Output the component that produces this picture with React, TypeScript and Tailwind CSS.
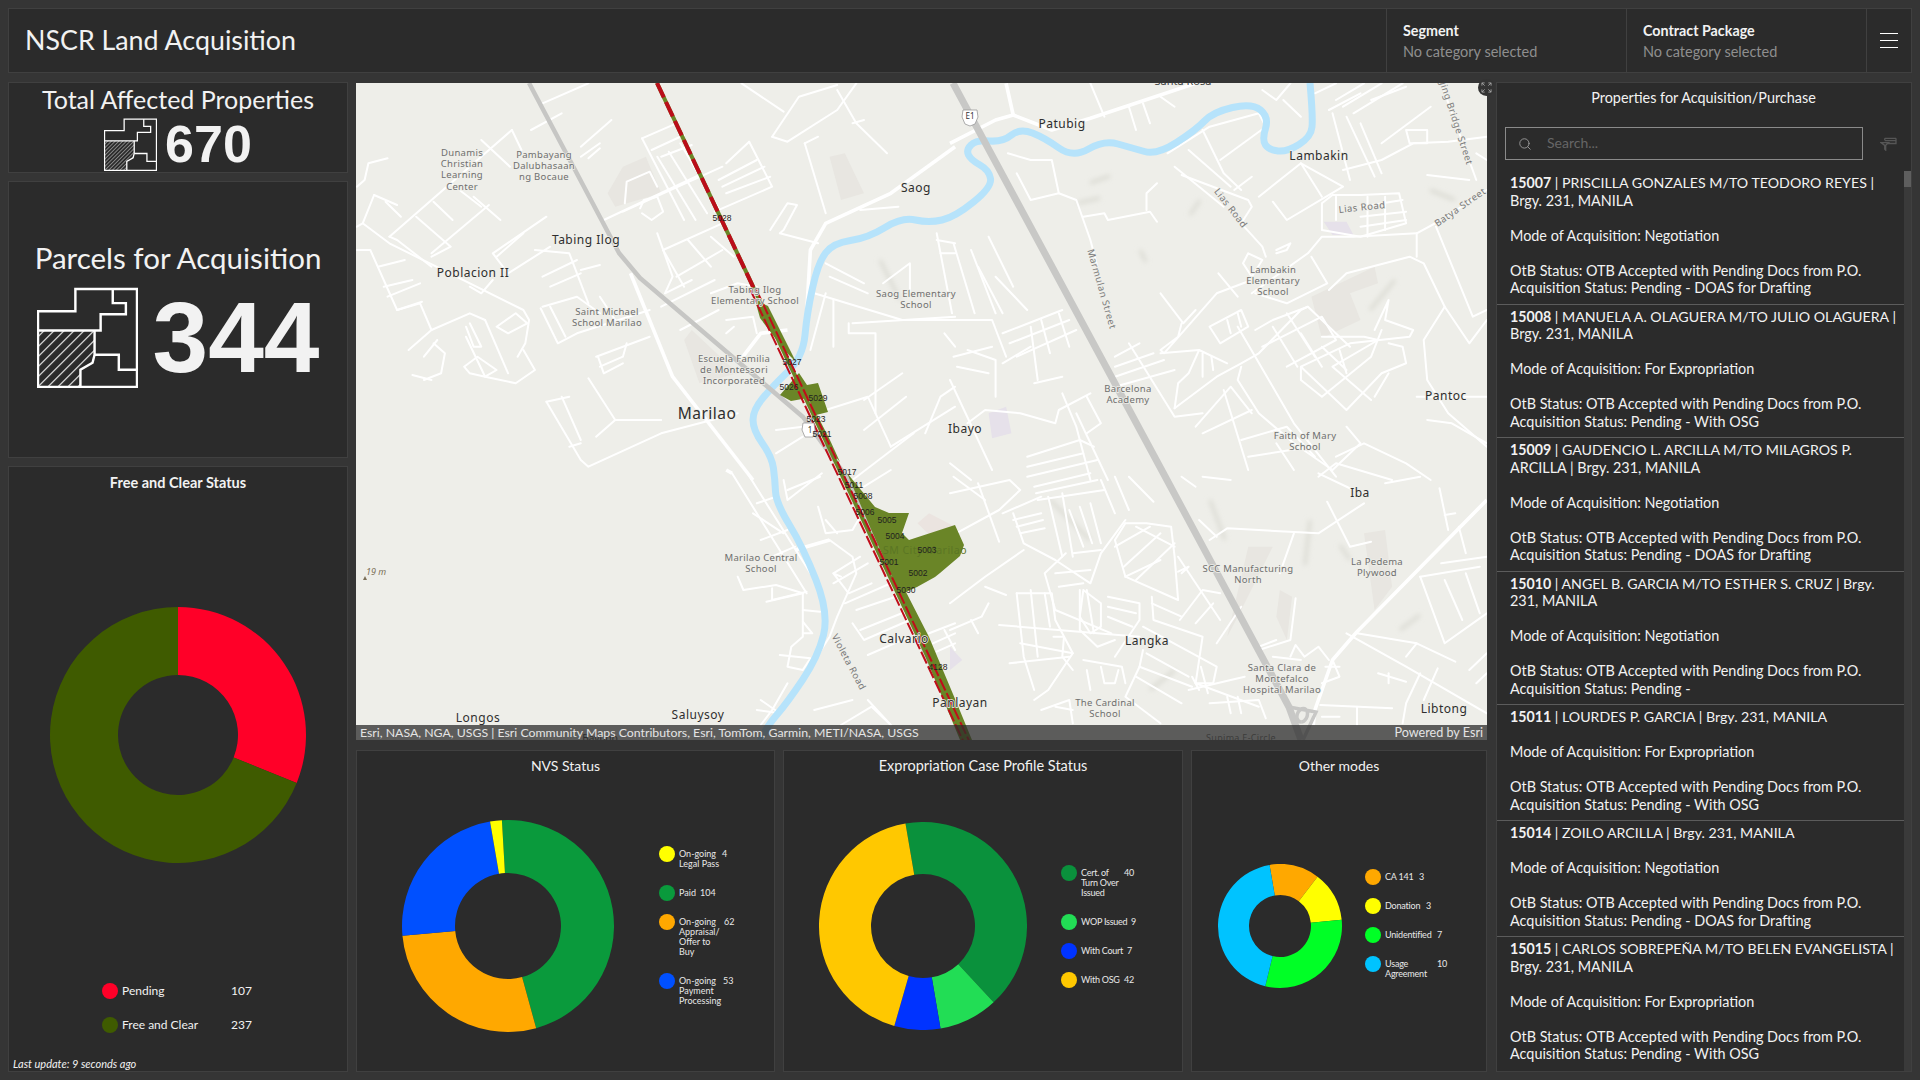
import React from "react";
import { Search } from "lucide-react";

type Region = { ox: number; oy: number; sx: number; sy: number; lines: number[][] };

const toPath = (r: Region, l: number[]) => {
  let d = "";
  for (let i = 0; i < l.length; i += 2) {
    d += `${i === 0 ? "M" : "L"}${(r.ox + l[i] / r.sx).toFixed(1)} ${(r.oy + l[i + 1] / r.sy).toFixed(1)}`;
  }
  return d;
};

const R3 = { ox: 355, oy: 80, sx: 2.613, sy: 3 };
const R4 = { ox: 950, oy: 80, sx: 2.85, sy: 3 };
const R5 = { ox: 355, oy: 470, sx: 2.613, sy: 3 };
const R6 = { ox: 950, oy: 470, sx: 2.85, sy: 3 };

const roads: Region[] = [
  { ...R3, lines: [
    [490,70,610,10],[1010,10,1120,95],[1090,170,1160,50,1260,15],[1090,170,1130,185,1260,90,1310,10],[1260,30,1310,130,1390,220],[1300,130,1330,120],
    [750,175,860,420],[790,230,890,420],[820,215,920,400],[850,190,950,385],[750,175,840,130],[775,210,860,165],[800,230,880,195],
    [650,420,900,285],[700,395,960,260],[705,370,710,305,770,275,790,320],[750,400,775,420,805,395,790,350,755,360,745,385],
    [950,300,1050,240],[960,320,1070,260],[970,340,1085,290],[1030,185,1090,320,940,395],[1030,185,970,250],
    [1175,190,1210,170],[1175,190,1230,400],[1085,450,1130,370,1155,375,1120,450,1110,460,1210,490],
    [590,200,670,120],[590,230,640,190],[610,235,640,205],[460,150,540,100],
    [410,150,90,470],[350,375,200,520],[410,150,435,210],[330,180,405,260],
    [85,235,35,250,25,300,5,320],[50,345,20,430,5,440],[50,345,110,375],[80,365,120,410],
    [5,510,40,510,110,690,175,665],[20,430,90,490,440,690,455,720,445,790,425,830],[90,470,110,480,200,560],
    [60,560,130,540],[75,620,150,600],[85,650,170,610],[160,410,250,500,200,530],[205,365,255,420],[250,310,330,380],[310,350,380,420],
    [110,690,170,670,200,750,140,810],[200,750,300,700,340,720],[300,620,330,640,360,600],[290,770,340,890,420,910,470,870,440,810],
    [340,720,400,880],[370,740,420,700,450,730,400,760,370,740],[285,860,320,830,370,870,340,890,300,880,285,860],
    [205,790,235,820,225,880,180,900],[180,830,215,780],[150,885,200,900],[300,730,330,800,310,800,290,740],
    [500,410,360,520,400,580,510,500],[440,460,370,530],[470,510,560,520,610,670],[490,590,580,540],[590,570,640,555],[510,620,590,580],
    [490,680,580,650,640,700],[485,685,530,790,580,760,770,690],[510,680,550,770],[640,650,680,720],
    [805,510,860,620],[805,510,960,430],[840,590,960,510],[870,480,930,560],[930,470,990,530],[790,460,830,590,810,640,880,600],
    [930,640,1000,610,1050,620],[800,680,940,600],[850,750,950,690],[970,720,1040,710,1050,760],[970,760,990,740],
    [630,830,770,770],[640,860,700,830,710,790],[635,830,650,880,700,850],[610,895,680,1020,800,1020],
    [500,965,590,1140,610,1160,800,1060,1000,1000],[540,950,590,1080],[560,1100,590,1090],[630,1070,680,1020],[500,965,560,950],
    [1190,810,1230,640],[1200,640,1430,720,1568,720],[1240,590,1340,640],[1230,550,1330,610],[1250,660,1250,800],[1290,730,1290,760,1360,760,1360,1000],
    [1380,610,1450,550,1450,640],[1300,730,1568,710],[1330,960,1430,880],[1330,1050,1440,950],[1400,1100,1568,980],[1300,1200,1460,1060],
    [1100,1050,1170,1040],[1100,1120,1170,1070],[1230,990,1340,950,1400,1100],[1490,1060,1530,950,1568,920],
    [1520,480,1568,490],[1530,520,1568,520],[1520,460,1560,700],[1540,760,1568,800],[1320,390,1420,380],
  ]},
  { ...R4, lines: [
    [510,80,530,150],[550,70,570,130],[600,50,640,80],[400,10,440,110],[165,220,230,240,290,240,310,340,230,360,190,280],[310,340,360,360,400,480,420,560],[380,410,440,400,450,420,570,395,590,425],[560,390,560,340,590,310],
    [620,220,740,140,880,100,900,140,770,240],[640,260,780,380],[660,285,850,360,860,380,830,430,890,500,900,530],[680,210,800,320],[720,150,780,280,830,330],[810,330,860,290],
    [880,350,1000,250,1120,320,960,420,920,365],[1000,250,1060,350],[860,640,1020,520,1060,470,1150,470,1330,460,1400,420,1530,330],
    [660,730,650,770,600,810,610,820,760,640,860,600],[600,640,665,730,700,690],[765,580,820,650],[1030,530,1075,610,960,670,870,640],
    [1080,630,1130,580,1310,530,1350,550,1410,680,1480,790,1530,720],[1330,460,1330,530],[1385,440,1490,710,1530,690],[1410,680,1350,780,1360,900,1420,1000,1530,1100],
    [1060,370,1060,450,1170,470,1300,430,1280,340,1170,345,1090,345,1060,370],[1170,380,1290,360],[1170,410,1300,395],[1170,440,1300,420],[1240,350,1240,450],[1190,350,1190,470],[1100,350,1100,420],
    [1040,40,1100,10],[1100,60,1180,10],[1120,80,1230,10],[1150,100,1290,10],[1200,60,1300,20],[1090,100,1140,300],[1130,110,1210,290],[1170,130,1230,280],[1230,190,1370,80],[1300,150,1360,150,1360,190,1310,190,1300,150],[1120,270,1230,240,1320,190,1420,185,1530,170],[1400,10,1500,300],[1360,285,1480,300],[1500,220,1530,240],[1080,90,1170,40],[890,30,930,60,970,10],[950,60,1000,110],
    [10,490,70,700],[60,510,130,700],[80,560,150,700],[110,470,180,620],[130,590,220,690],[0,720,120,720,160,830],[150,760,320,690],[170,790,340,720],[190,830,360,750],[230,740,250,900],[260,720,285,820],[310,700,340,800],
    [50,810,130,840,130,950],[220,1130,370,1080,410,1100],[220,1160,380,1120],[220,1190,420,1140],[0,900,120,1170],[0,1150,60,1200],[400,940,310,990,300,1030,200,1000,100,990,50,1030],[360,1000,450,1200],[320,940,360,1040,400,1200],[390,950,430,1030,390,1060],[10,830,120,800],[20,860,110,880],[150,850,230,800],[240,910,320,890],
    [470,830,540,790],[470,860,580,820],[470,890,610,840],[470,920,640,870],[510,790,640,1010,720,1000],[600,820,710,810,790,850],[710,810,680,880,650,910,640,985],[720,820,720,890],[745,830,750,870],[640,985,760,890,830,850,880,820,1000,690,1020,680,1140,800],
    [740,740,830,690,850,740,770,790,740,740],[790,720,800,760],[820,700,830,740],[820,740,870,830,980,1030,1100,1190],[870,750,920,720,1020,680],[890,800,1060,710,1100,780,960,860],[920,740,990,860],[960,700,1040,830],[1000,760,1060,860],
    [1060,770,1180,770,1220,780,1090,860,1200,960],[1060,800,1130,870],[1110,810,1130,880],[1210,750,1250,660,1240,720,1320,750,1310,770,1140,790,1000,860,1000,900,1060,950,1200,830,1230,750],[1000,860,1130,990,1230,880,1300,850,1290,800,1250,790],[1210,950,1250,880],
    [830,860,820,900,880,1000,980,1090,1090,1170,1170,1090,1130,1040],[700,1040,800,920,860,1000],[720,1060,860,990],[780,930,850,1170],[830,1080,960,1040,1040,1130],[850,1130,1030,1100],[1100,1130,1180,1090,1300,1150,1370,1200],[1330,950,1530,950],[1360,1020,1430,1030,1530,1090],[1050,1190,1100,1150,1260,1200],
    [930,1090,980,1170],[850,520,890,540,860,590,835,550,850,520],[930,510,970,490,960,510,930,520],
  ]},
  { ...R5, lines: [
    [985,10,1180,370],[1020,0,1190,310],[1050,100,1100,80],[1040,130,1120,190],[1060,210,1130,180],[1090,260,1150,230],
    [1000,320,1015,360,1100,345,1170,370],[1090,355,1090,390,1180,365],[1075,395,1170,370],[1170,370,1170,500,1140,530,1130,590,1170,600,1190,565,1110,555],[1170,420,1215,425],[1170,455,1195,490,1170,490],
    [1130,640,1090,720,1060,765],[1060,690,1110,730,1050,720],[1120,30,1130,90,1220,10],[1130,60,1215,20],[1210,110,1230,190,1300,180,1340,100],[1230,150,1260,190],
    [1240,210,1300,260,1310,310,1260,440,1240,500,1140,680],[1250,310,1320,260],[1250,340,1340,280],[1280,400,1420,330],[1310,420,1440,370],[1320,480,1450,420],[1270,320,1250,310,1290,370,1350,340],[1340,555,1450,500],[1300,460,1330,510,1450,450],
    [1200,720,1300,690],[1270,765,1350,710,1400,765],[1340,690,1400,765],[1500,490,1568,460],[1510,520,1568,490],[1520,545,1568,520],[1540,480,1568,540],[1330,50,1400,0],
  ]},
  { ...R6, lines: [
    [0,70,170,30,200,60,140,120,0,200],[80,40,140,215],[150,130,260,80],[180,130,210,220,300,270,400,340,430,250,500,150],
    [240,50,400,10],[245,70,420,30],[250,90,440,60],[180,150,260,130],[190,170,265,150],[200,190,270,175],
    [280,80,320,260],[320,70,350,260],[340,120,380,230],[370,110,405,220],[400,100,430,220],[430,30,470,130],[470,20,510,120],[510,20,580,95],
    [350,250,430,240],[330,250,270,310,300,420,460,490],[300,310,400,300],[310,350,380,340],[380,360,430,400,430,470,400,490,370,440,380,360],
    [500,160,470,210,500,320,650,390,640,260,630,170,560,160,500,160],[530,170,640,230],[470,230,570,170],[495,290,600,190],[530,330,640,220],[500,320,600,270],
    [650,260,770,450],[660,310,680,290,650,305],[575,380,580,450,720,500,700,640,750,640,760,590,550,470],[575,400,660,440],[655,450,720,360,770,370],[700,460,750,400],
    [450,380,540,400,540,450,470,560],[450,410,530,430],[450,440,520,470],[190,370,290,370,300,450,350,550,280,660,240,690],[190,370,210,560,240,660],[230,360,250,560],[270,370,285,470],
    [140,465,540,500],[200,520,350,550],[295,500,325,500,320,560,350,600],[170,580,340,560],[370,360,370,480,420,530,470,510],[390,360,410,490],
    [380,570,490,590,500,640],[390,600,400,660],[430,590,440,640,470,640,480,600],[530,620,660,700],[560,550,680,620],[540,590,690,650],[550,540,540,590,500,680,600,760],
    [680,660,800,630,840,620],[690,620,710,660],[715,590,735,670],[700,640,880,710],[740,700,880,690,900,745],[790,680,800,730],[820,680,830,730],
    [880,530,930,510],[920,560,1000,570],[970,560,985,525,1010,560,1050,530,1080,570],[1090,570,1110,620,1060,640],[1070,590,1110,590],
    [1130,490,1300,590,1530,730],[1160,490,1330,520,1440,575],[1330,520,1300,560],[1220,610,1300,635],[1250,610,1250,640],[1340,610,1300,700,1290,760],[1390,595,1350,690],
    [1055,705,1260,715],[1060,740,1110,740],[1160,710,1160,765],[1340,320,1410,520,1530,430],[1410,330,1460,450],[1470,310,1510,430],[1340,320,1510,290],[1400,280,1530,260],
    [710,150,760,200],[740,210,790,175,1050,190,1180,100],[1075,95,1140,230,1200,215],[980,190,940,310],[1395,55,1420,180],[1410,135,1440,130],[1450,170,1470,250],[1480,600,1530,550],[1500,640,1530,610],
    [760,520,830,410],[985,385,970,510,880,540],[0,400,100,320,210,240],[100,350,160,375],[0,480,90,440,110,400],[60,450,80,490],[10,20,100,90],[260,720,340,690,350,760],[300,710,350,720],
    [660,20,700,50],[720,20,800,30],[1050,10,1150,60],[1240,40,1340,20],
  ]},
];

const thick: Region[] = [
  { ...R3, lines: [[1180,700,1190,510,1230,430,1400,340,1568,200],[1000,850,1060,760,1130,750],[720,580,830,890,1040,1200]] },
  { ...R4, lines: [[0,190,130,120,180,105,290,150,400,115,700,10],[160,10,180,105]] },
  { ...R5, lines: [[970,0,985,10],[1150,240,1240,210]] },
  { ...R6, lines: [[1530,90,1160,485,1090,570,1040,720,1035,765]] },
];

const patches: [Region, number[], string][] = [
  [{ ...R3, lines: [] }, [700,260,760,230,800,340,680,380,660,340], "#e8e6e1"],
  [{ ...R3, lines: [] }, [1240,230,1280,220,1330,340,1270,360], "#e8e6e1"],
  [{ ...R3, lines: [] }, [860,780,880,750,1000,880,900,910], "#e8e6e1"],
  [{ ...R4, lines: [] }, [1030,650,1210,560,1220,610,1140,640,1170,720,1060,775], "#e8e6e1"],
  [{ ...R4, lines: [] }, [110,1000,160,980,175,1060,120,1075], "#e6e1ea"],
  [{ ...R4, lines: [] }, [1065,425,1130,425,1150,465,1090,465], "#e6e1ea"],
  [{ ...R6, lines: [] }, [1180,190,1240,180,1260,350,1210,420], "#e8e6e1"],
  [{ ...R6, lines: [] }, [850,230,920,230,830,420,790,500], "#e8e6e1"],
  [{ ...R6, lines: [] }, [940,360,975,380,960,510,930,440], "#e8e6e1"],
  [{ ...R6, lines: [] }, [0,530,35,570,0,600], "#e6e1ea"],
  [{ ...R5, lines: [] }, [1470,160,1500,130,1568,170,1510,205], "#ebe4e0"],
];

const smudges: number[][] = [
  [1090,183,1110,176],[1078,203,1100,198],[1140,250,1146,262],[1200,200,1190,215],[1430,190,1455,200],[1370,310,1395,280],
  [1210,500,1225,540],[1305,565,1310,520],[1340,545,1350,560],[1400,630,1420,615],[880,260,900,300],[1050,500,1090,540],[1150,690,1175,670],
];

const riverPts = [
  [1310,83],[1313,117],[1311,137],[1287,152],[1269,150],[1262,140],[1269,117],[1252,103],[1213,112],[1196,130],[1157,155],[1132,148],[1104,140],[1073,158],[1045,138],[1020,128],[1003,142],[976,140],[966,150],[971,160],[989,170],[992,187],[955,217],[929,223],[902,217],[868,238],[833,243],[818,263],[807,313],[803,357],[772,387],[753,410],[753,430],[772,457],[775,480],[776,503],[803,547],[829,613],[818,657],[787,703],[768,725],[760,742],
];
const smooth = (p: number[][]) => {
  let d = `M${p[0][0]} ${p[0][1]}`;
  for (let i = 1; i < p.length - 1; i++) {
    const mx = (p[i][0] + p[i + 1][0]) / 2;
    const my = (p[i][1] + p[i + 1][1]) / 2;
    d += `Q${p[i][0]} ${p[i][1]} ${mx} ${my}`;
  }
  const l = p[p.length - 1];
  return d + `L${l[0]} ${l[1]}`;
};

const labels: { x: number; y: number; t: string[]; rot?: number }[] = [
  { x: 462, y: 152, t: ["Dunamis", "Christian", "Learning", "Center"] },
  { x: 544, y: 154, t: ["Pambayang", "Dalubhasaan", "ng Bocaue"] },
  { x: 607, y: 311, t: ["Saint Michael", "School Marilao"] },
  { x: 755, y: 289, t: ["Tabing Ilog", "Elementary School"] },
  { x: 916, y: 293, t: ["Saog Elementary", "School"] },
  { x: 734, y: 358, t: ["Escuela Familia", "de Montessori", "Incorporated"] },
  { x: 1273, y: 269, t: ["Lambakin", "Elementary", "School"] },
  { x: 1128, y: 388, t: ["Barcelona", "Academy"] },
  { x: 1305, y: 435, t: ["Faith of Mary", "School"] },
  { x: 761, y: 557, t: ["Marilao Central", "School"] },
  { x: 1248, y: 568, t: ["SCC Manufacturing", "North"] },
  { x: 1377, y: 561, t: ["La Pedema", "Plywood"] },
  { x: 1282, y: 667, t: ["Santa Clara de", "Montefalco", "Hospital Marilao"] },
  { x: 1105, y: 702, t: ["The Cardinal", "School"] },
  { x: 1231, y: 208, t: ["Lias Road"], rot: 52 },
  { x: 1362, y: 207, t: ["Lias Road"], rot: -6 },
  { x: 1102, y: 289, t: ["Marmulan Street"], rot: 74 },
  { x: 1453, y: 112, t: ["Bridging Bridge Street"], rot: 72 },
  { x: 1460, y: 207, t: ["Batya Street"], rot: -35 },
  { x: 849, y: 662, t: ["Violeta Road"], rot: 62 },
];
const places: { x: number; y: number; t: string; s?: number }[] = [
  { x: 586, y: 239, t: "Tabing Ilog" }, { x: 473, y: 272, t: "Poblacion II" }, { x: 916, y: 187, t: "Saog" },
  { x: 707, y: 413, t: "Marilao", s: 15.5 }, { x: 1062, y: 123, t: "Patubig" }, { x: 1319, y: 155, t: "Lambakin" },
  { x: 965, y: 428, t: "Ibayo" }, { x: 1446, y: 395, t: "Pantoc" }, { x: 1360, y: 492, t: "Iba" },
  { x: 478, y: 717, t: "Longos" }, { x: 698, y: 714, t: "Saluysoy" }, { x: 904, y: 638, t: "Calvario" },
  { x: 960, y: 702, t: "Panlayan" }, { x: 1147, y: 640, t: "Langka" }, { x: 1444, y: 708, t: "Libtong" },
];
const codes: [number, number, string][] = [
  [722,218,"5028"],[792,362,"5027"],[789,387,"5026"],[818,398,"5029"],[816,419,"5023"],[822,434,"5021"],[847,472,"5017"],
  [854,485,"5011"],[863,496,"5008"],[865,512,"5006"],[887,520,"5005"],[895,536,"5004"],[927,550,"5003"],[889,562,"5001"],[918,573,"5002"],[906,590,"5030"],[938,667,"4128"],
];

function MapDrawing() {
  return (
    <svg viewBox="356 83 1131 657" className="block w-full h-full [font-family:'Noto_Sans',sans-serif]">
      <defs>
        <filter id="soft"><feGaussianBlur stdDeviation="2.5" /></filter>
      </defs>
      <rect x="356" y="83" width="1131" height="657" fill="#eeeee9" />
      {patches.map(([r, l, c], i) => {
        let pts = "";
        for (let j = 0; j < l.length; j += 2) pts += `${r.ox + l[j] / r.sx},${r.oy + l[j + 1] / r.sy} `;
        return <polygon key={i} points={pts} fill={c} />;
      })}
      <g filter="url(#soft)" stroke="#d8d8d0" strokeWidth="3" fill="none">
        {smudges.map((s, i) => <line key={i} x1={s[0]} y1={s[1]} x2={s[2]} y2={s[3]} />)}
      </g>
      <g fill="none" stroke="#ffffff" strokeWidth="2" strokeLinejoin="round" strokeLinecap="round">
        {roads.flatMap((r, i) => r.lines.map((l, j) => <path key={`${i}-${j}`} d={toPath(r, l)} />))}
      </g>
      <g fill="none" stroke="#ffffff" strokeWidth="3.6" strokeLinejoin="round">
        {thick.flatMap((r, i) => r.lines.map((l, j) => <path key={`${i}-${j}`} d={toPath(r, l)} />))}
      </g>
      <path d={smooth(riverPts)} fill="none" stroke="#b6e3fb" strokeWidth="7" strokeLinejoin="round" />
      <path d="M529 83L619 253L640 278L803 417L849 480L955 720L967 745" fill="none" stroke="#c6c6c4" strokeWidth="4.5" strokeLinejoin="round" />
      <path d="M953 83L1167 480L1289 707L1301 740" fill="none" stroke="#c8c8c6" strokeWidth="7" />
      <path d="M1289 707L1316 712L1303 740M1301 722a5 7 20 1 1 .1 0" fill="none" stroke="#c8c8c6" strokeWidth="3.5" />

      <g fill="#6a8527">
        <polygon points="755,300 768,306 796,362 786,352 772,334 760,318" />
        <polygon points="799,373 780,395 791,401 808,398 816,415 828,412 818,383 807,385" />
        <polygon points="816,413 829,438 840,462 828,448 818,427" />
        <polygon points="847,473 875,507 889,513 909,513 902,533 909,540 955,525 964,545 960,556 940,573 935,577 917,587 906,592 929,637 958,706 972,740 960,740 929,665 898,590 870,527" />
      </g>
      <path d="M657 83L967 740" fill="none" stroke="#6a8527" strokeWidth="4" />
      <path d="M657 83L755 291" fill="none" stroke="#bb0d1a" strokeWidth="4" strokeDasharray="16 5" />
      <g fill="none" stroke="#c00d1a" strokeWidth="2" strokeDasharray="13 3">
        <path d="M753 289L970 749" transform="translate(-2.5 1)" />
        <path d="M753 289L970 749" transform="translate(2.5 -1)" />
      </g>

      {labels.map((l, i) =>
        l.rot !== undefined ? (
          <text key={i} x={l.x} y={l.y} transform={`rotate(${l.rot} ${l.x} ${l.y})`} textAnchor="middle" dominantBaseline="central" fontSize="9.5" letterSpacing=".5" fill="#7a7a7a" stroke="#eeeee9" strokeWidth="1.5" paintOrder="stroke">{l.t[0]}</text>
        ) : (
          <g key={i}>
            {l.t.map((t, j) => (
              <text key={j} x={l.x} y={l.y + j * 11.4} textAnchor="middle" dominantBaseline="central" fontSize="9.5" letterSpacing=".3" fill="#6e6e6e" stroke="#eeeee9" strokeWidth="1.5" paintOrder="stroke">{t}</text>
            ))}
          </g>
        )
      )}
      {places.map((p, i) => (
        <text key={i} x={p.x} y={p.y} textAnchor="middle" dominantBaseline="central" fontSize={p.s ?? 12} letterSpacing=".5" fill="#2e2e2e" stroke="#eeeee9" strokeWidth="1.5" paintOrder="stroke">{p.t}</text>
      ))}
      <text x="925" y="550" textAnchor="middle" dominantBaseline="central" fontSize="10.5" letterSpacing=".5" fill="#5b7624">SM City Marilao</text>
      <text x="1241" y="737" textAnchor="middle" dominantBaseline="central" fontSize="9" letterSpacing=".3" fill="#6e6e6e">Supima E-Circle</text>
      <text x="600" y="738" textAnchor="middle" dominantBaseline="central" fontSize="10" fill="#333">Bayugo</text>
      <text x="1183" y="80" textAnchor="middle" dominantBaseline="central" fontSize="11" fill="#444">Santa Rosa</text>
      <text x="366" y="571" dominantBaseline="central" fontSize="9" fontStyle="italic" fill="#7b6f58">19 m</text>
      <polygon points="363,580 365,576 367,580" fill="#7b6f58" />

      <path d="M963 110h14l1 7-3 7-5 2-5-2-3-7z" fill="#fff" stroke="#999" strokeWidth=".8" />
      <text x="970" y="115.5" textAnchor="middle" dominantBaseline="central" fontSize="8" fill="#333">E1</text>
      <path d="M803 423h11l1 7-2 7h-8l-3-7z" fill="#fff" stroke="#999" strokeWidth=".8" />
      <text x="810" y="429" textAnchor="middle" dominantBaseline="central" fontSize="8" fill="#333">1</text>

      {codes.map(([x, y, t], i) => (
        <text key={i} x={x} y={y} textAnchor="middle" dominantBaseline="central" fontSize="8.5" fill="#1f1f1f" className="[font-family:'Liberation_Sans',sans-serif]">{t}</text>
      ))}
    </svg>
  );
}

function ParcelIcon({ size, id, gap }: { size: number; id: string; gap: number }) {
  return (
    <svg viewBox="0 0 100 100" width={size} height={size} className="shrink-0">
      <defs>
        <pattern id={id} width={gap} height={gap} patternUnits="userSpaceOnUse" patternTransform="rotate(45)">
          <line x1="0" y1="0" x2="0" y2={gap} stroke="#fff" strokeWidth={gap * 0.3} />
        </pattern>
      </defs>
      <polygon points="1,43 57,43 57,67 55,75 43,82 43,99 1,99" fill={`url(#${id})`} />
      <g fill="none" stroke="#fff" strokeWidth="2.4">
        <polygon points="38,2 99,2 99,99 1,99 1,24 38,24" />
        <polyline points="75,2 75,16 88,16 88,27 63,27 63,43 1,43" />
        <polyline points="57,43 57,67 55,75 43,82 43,99" />
        <polyline points="57,67 81,67 81,82 99,82" />
      </g>
    </svg>
  );
}

const polar = (cx: number, cy: number, r: number, a: number) => {
  const t = ((a - 90) * Math.PI) / 180;
  return [cx + r * Math.cos(t), cy + r * Math.sin(t)];
};

function Donut({ R, r, start, data }: { R: number; r: number; start: number; data: { v: number; c: string }[] }) {
  const total = data.reduce((s, d) => s + d.v, 0);
  let a = start;
  return (
    <svg width={R * 2} height={R * 2} viewBox={`0 0 ${R * 2} ${R * 2}`} className="shrink-0 block">
      {data.map((d, i) => {
        const b = a + (d.v / total) * 360;
        const [x1, y1] = polar(R, R, R, a);
        const [x2, y2] = polar(R, R, R, b);
        const [x3, y3] = polar(R, R, r, b);
        const [x4, y4] = polar(R, R, r, a);
        const large = b - a > 180 ? 1 : 0;
        const p = `M${x1} ${y1}A${R} ${R} 0 ${large} 1 ${x2} ${y2}L${x3} ${y3}A${r} ${r} 0 ${large} 0 ${x4} ${y4}Z`;
        a = b;
        return <path key={i} d={p} fill={d.c} />;
      })}
    </svg>
  );
}

type Row = { c: string; l: string[]; v: string; w: string };
function Legend({ rows, cls }: { rows: Row[]; cls: string }) {
  return (
    <div className={`flex flex-col text-[9px] leading-[10px] text-[#e8e8e8] ${cls}`}>
      {rows.map((r, i) => (
        <div key={i} className="flex items-start">
          <span className="w-4 h-4 rounded-full shrink-0" style={{ backgroundColor: r.c }} />
          <div className="ml-1 pt-[3px] pb-4 whitespace-nowrap" style={{ width: r.w }}>
            {r.l.map((t) => <div key={t}>{t}</div>)}
          </div>
          <div className="pt-[3px]">{r.v}</div>
        </div>
      ))}
    </div>
  );
}

const items: { id: string; first: string; second?: string; mode: string; status: string }[] = [
  { id: "15007", first: " | PRISCILLA GONZALES M/TO TEODORO REYES |", second: "Brgy. 231, MANILA", mode: "Negotiation", status: "Pending - DOAS for Drafting" },
  { id: "15008", first: " | MANUELA A. OLAGUERA M/TO JULIO OLAGUERA |", second: "Brgy. 231, MANILA", mode: "For Expropriation", status: "Pending - With OSG" },
  { id: "15009", first: " | GAUDENCIO L. ARCILLA M/TO MILAGROS P.", second: "ARCILLA | Brgy. 231, MANILA", mode: "Negotiation", status: "Pending - DOAS for Drafting" },
  { id: "15010", first: " | ANGEL B. GARCIA M/TO ESTHER S. CRUZ | Brgy.", second: "231, MANILA", mode: "Negotiation", status: "Pending -" },
  { id: "15011", first: " | LOURDES P. GARCIA | Brgy. 231, MANILA", mode: "For Expropriation", status: "Pending - With OSG" },
  { id: "15014", first: " | ZOILO ARCILLA | Brgy. 231, MANILA", mode: "Negotiation", status: "Pending - DOAS for Drafting" },
  { id: "15015", first: " | CARLOS SOBREPEÑA M/TO BELEN EVANGELISTA |", second: "Brgy. 231, MANILA", mode: "For Expropriation", status: "Pending - With OSG" },
];

const panel = "bg-[#2b2b2b] border border-[#404040]";

export default function App() {
  return (
    <div className="w-[1920px] h-[1080px] overflow-hidden bg-[#353535] p-2 flex flex-col gap-[9px] text-[#f2f2f2] [font-family:Lato,sans-serif]">
      <header className={`${panel} h-[65px] shrink-0 flex items-stretch`}>
        <div className="flex-1 flex items-center pl-[16px] text-[26.8px] font-normal">NSCR Land Acquisition</div>
        <div className="w-[240px] border-l border-[#404040] pl-4 flex flex-col justify-center">
          <div className="text-[14.3px] leading-[21px] font-bold">Segment</div>
          <div className="text-[14.5px] leading-[21px] text-[#8f8f8f]">No category selected</div>
        </div>
        <div className="w-[240px] border-l border-[#404040] pl-4 flex flex-col justify-center">
          <div className="text-[14.3px] leading-[21px] font-bold">Contract Package</div>
          <div className="text-[14.5px] leading-[21px] text-[#8f8f8f]">No category selected</div>
        </div>
        <div className="w-[45px] border-l border-[#404040] flex flex-col justify-center items-center gap-[6px]">
          <span className="block w-[18px] h-px bg-white" />
          <span className="block w-[18px] h-px bg-white" />
          <span className="block w-[18px] h-px bg-white" />
        </div>
      </header>

      <div className="flex-1 min-h-0 flex gap-2">
        <aside className="w-[340px] shrink-0 flex flex-col gap-2">
          <section className={`${panel} h-[91px] shrink-0 flex flex-col items-center`}>
            <div className="text-[25px] leading-[32px]">Total Affected Properties</div>
            <div className="flex items-center mt-[2px] gap-[8px]">
              <ParcelIcon size={53} id="h1" gap={5} />
              <span className="text-[52px] leading-[54px] font-bold [font-family:'Liberation_Sans',sans-serif]">670</span>
            </div>
          </section>
          <section className={`${panel} h-[277px] shrink-0 flex flex-col items-center pt-[58px]`}>
            <div className="text-[29.5px] leading-[36px]">Parcels for Acquisition</div>
            <div className="flex items-center mt-[11px] gap-[15px]">
              <ParcelIcon size={101} id="h2" gap={7} />
              <span className="text-[100px] leading-[101px] font-bold [font-family:'Liberation_Sans',sans-serif]">344</span>
            </div>
          </section>
          <section className={`${panel} flex-1 min-h-0 flex flex-col items-center`}>
            <div className="text-[14.5px] leading-[31px] font-bold h-[31px]">Free and Clear Status</div>
            <div className="mt-[109px]">
              <Donut R={128} r={60} start={0} data={[{ v: 107, c: "#ff0028" }, { v: 237, c: "#3f5b00" }]} />
            </div>
            <div className="mt-[120px] self-start ml-[93px] flex flex-col gap-[18px] text-[12px] leading-[16px]">
              {[["#ff0028", "Pending", "107"], ["#3f5b00", "Free and Clear", "237"]].map(([c, l, v]) => (
                <div key={l} className="flex items-center w-[150px]">
                  <span className="w-4 h-4 rounded-full shrink-0" style={{ backgroundColor: c }} />
                  <span className="ml-1 flex-1">{l}</span>
                  <span>{v}</span>
                </div>
              ))}
            </div>
            <div className="self-start ml-[4px] mt-[24px] text-[11px] leading-[14px] italic">Last update: 9 seconds ago</div>
          </section>
        </aside>

        <main className="w-[1131px] shrink-0 flex flex-col gap-[10px]">
          <div className="relative h-[657px] shrink-0 mt-[1px]">
            <MapDrawing />
            <div className="absolute left-0 right-0 bottom-0 h-[15px] bg-[#2b2b2b]/75 flex items-center justify-between px-[4px] text-[12.3px] leading-[15px] text-[#e4e4e4]">
              <span>Esri, NASA, NGA, USGS | Esri Community Maps Contributors, Esri, TomTom, Garmin, METI/NASA, USGS</span>
              <span className="text-[12.6px]">Powered by Esri</span>
            </div>
            <div className="absolute right-[-8px] top-[-4px] w-[17px] h-[17px] rounded-full bg-[#333] flex items-center justify-center">
              <svg viewBox="0 0 12 12" width="11" height="11" fill="none" stroke="#aaa" strokeWidth=".9">
                <path d="M1 4V1h3M8 1h3v3M11 8v3H8M4 11H1V8M1 1l3 3M11 1L8 4M11 11L8 8M1 11l3-3" />
              </svg>
            </div>
          </div>
          <div className="flex-1 min-h-0 flex gap-2">
            <section className={`${panel} w-[419px] shrink-0 flex flex-col`}>
              <div className="h-[30px] text-center text-[14px] leading-[30px]">NVS Status</div>
              <div className="flex-1 flex items-center pl-[45px]">
                <Donut R={106} r={53} start={-3.3} data={[{ v: 104, c: "#0a9a3c" }, { v: 62, c: "#ffa800" }, { v: 53, c: "#0050ff" }, { v: 4, c: "#ffff00" }]} />
                <Legend cls="ml-[45px] mt-[15px]" rows={[
                  { c: "#ffff00", l: ["On-going", "Legal Pass"], v: "4", w: "43px" },
                  { c: "#0a9a3c", l: ["Paid"], v: "104", w: "21px" },
                  { c: "#ffa800", l: ["On-going", "Appraisal/", "Offer to", "Buy"], v: "62", w: "45px" },
                  { c: "#0050ff", l: ["On-going", "Payment", "Processing"], v: "53", w: "44px" },
                ]} />
              </div>
            </section>
            <section className={`${panel} w-[400px] shrink-0 flex flex-col`}>
              <div className="h-[30px] text-center text-[14.5px] leading-[30px]">Expropriation Case Profile Status</div>
              <div className="flex-1 flex items-center pl-[35px]">
                <Donut R={104} r={52} start={-9.7} data={[{ v: 40, c: "#0a913c" }, { v: 9, c: "#22dd55" }, { v: 7, c: "#0033ff" }, { v: 42, c: "#ffc800" }]} />
                <Legend cls="ml-[34px] mt-[13px] tracking-[-.25px]" rows={[
                  { c: "#0a913c", l: ["Cert. of", "Turn Over", "Issued"], v: "40", w: "43px" },
                  { c: "#22dd55", l: ["WOP Issued"], v: "9", w: "50px" },
                  { c: "#0033ff", l: ["With Court"], v: "7", w: "46px" },
                  { c: "#ffc800", l: ["With OSG"], v: "42", w: "43px" },
                ]} />
              </div>
            </section>
            <section className={`${panel} flex-1 min-w-0 flex flex-col`}>
              <div className="h-[30px] text-center text-[14px] leading-[30px]">Other modes</div>
              <div className="flex-1 flex items-center pl-[26px]">
                <Donut R={62} r={31} start={-9.7} data={[{ v: 3, c: "#ffa800" }, { v: 3, c: "#ffff00" }, { v: 7, c: "#00ff26" }, { v: 10, c: "#00c3ff" }]} />
                <Legend cls="ml-[23px] mt-[12px] tracking-[-.2px]" rows={[
                  { c: "#ffa800", l: ["CA 141"], v: "3", w: "34px" },
                  { c: "#ffff00", l: ["Donation"], v: "3", w: "41px" },
                  { c: "#00ff26", l: ["Unidentified"], v: "7", w: "52px" },
                  { c: "#00c3ff", l: ["Usage", "Agreement"], v: "10", w: "52px" },
                ]} />
              </div>
            </section>
          </div>
        </main>

        <aside className={`${panel} flex-1 min-w-0 ml-[1px] flex flex-col`}>
          <div className="h-[44px] shrink-0 text-center text-[14.4px] leading-[30px] pr-[1px]">Properties for Acquisition/Purchase</div>
          <div className="flex items-center pl-2 pr-[14px] shrink-0 h-[33px]">
            <div className="w-[358px] h-[33px] border border-[#8a8a8a] flex items-center">
              <Search size={14} className="ml-[12px] text-[#999]" strokeWidth={1.6} />
              <span className="ml-[15px] text-[14px] leading-[18px] mb-[2px] text-[#666]">Search...</span>
            </div>
            <svg viewBox="0 0 18 16" width="17" height="15" className="ml-auto" fill="none" stroke="#565656" strokeWidth="1.4">
              <path d="M1 7h8L6 10v5l-1-1v-4zM5 2.5h12M5 2.5v2M17 2.5V8H8M5 5h12" />
            </svg>
          </div>
          <div className="flex-1 min-h-0 mt-[11px] flex overflow-hidden">
            <div className="flex-1 min-w-0 text-[14.4px] leading-[17.5px] overflow-hidden">
              {items.map((it, i) => (
                <div key={it.id} className={`pl-[13px] pt-[3px] pb-[7px] whitespace-nowrap ${i < items.length - 1 ? "border-b border-[#5c5c5c]" : ""}`}>
                  <div className="text-[14.2px]"><b className="font-bold">{it.id}</b>{it.first}</div>
                  {it.second && <div>{it.second}</div>}
                  <div className="h-[17.5px]" />
                  <div>Mode of Acquisition: {it.mode}</div>
                  <div className="h-[17.5px]" />
                  <div>OtB Status: OTB Accepted with Pending Docs from P.O.</div>
                  <div>Acquisition Status: {it.status}</div>
                </div>
              ))}
            </div>
            <div className="w-[7px] shrink-0 bg-[#3a3a3a]">
              <div className="h-[16px] bg-[#5e5e5e]" />
            </div>
          </div>
        </aside>
      </div>
    </div>
  );
}
